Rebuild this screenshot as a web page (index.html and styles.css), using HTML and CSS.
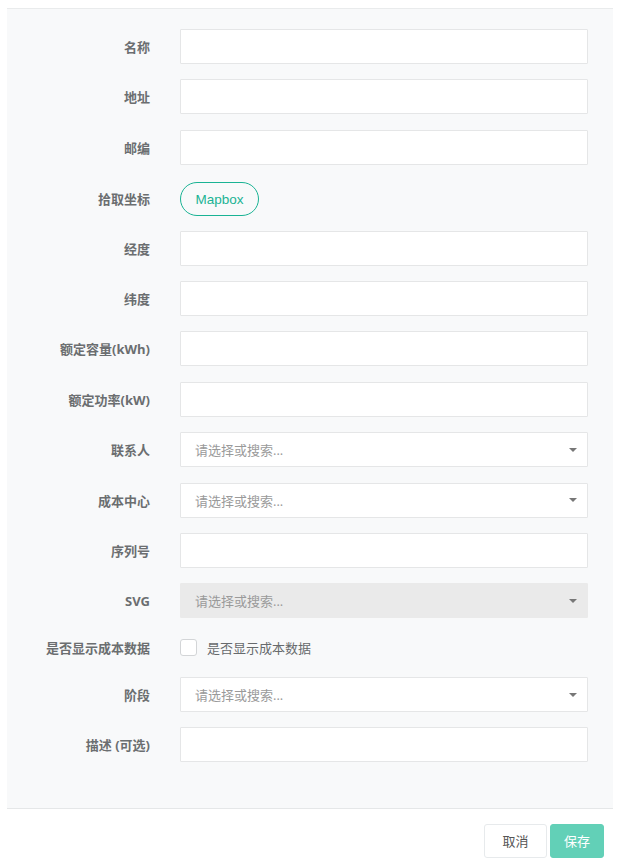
FILE: index.html
```html
<!DOCTYPE html>
<html lang="zh">
<head>
<meta charset="utf-8">
<title>表单</title>
<link rel="stylesheet" href="styles.css">
</head>
<body>
<div class="modal">
  <div class="modal-body">
    <form class="form">
      <div class="row"><label class="lbl">名称</label><input class="inp" type="text"></div>
      <div class="row"><label class="lbl">地址</label><input class="inp" type="text"></div>
      <div class="row"><label class="lbl">邮编</label><input class="inp" type="text"></div>
      <div class="row"><label class="lbl">拾取坐标</label><div class="ctl"><button type="button" class="btn-map">Mapbox</button></div></div>
      <div class="row"><label class="lbl">经度</label><input class="inp" type="text"></div>
      <div class="row"><label class="lbl">纬度</label><input class="inp" type="text"></div>
      <div class="row"><label class="lbl">额定容量(kWh)</label><input class="inp" type="text"></div>
      <div class="row"><label class="lbl">额定功率(kW)</label><input class="inp" type="text"></div>
      <div class="row"><label class="lbl">联系人</label><div class="sel"><span class="ph">请选择或搜索...</span><b class="caret"></b></div></div>
      <div class="row"><label class="lbl">成本中心</label><div class="sel"><span class="ph">请选择或搜索...</span><b class="caret"></b></div></div>
      <div class="row"><label class="lbl">序列号</label><input class="inp" type="text"></div>
      <div class="row"><label class="lbl">SVG</label><div class="sel sel-disabled"><span class="ph">请选择或搜索...</span><b class="caret"></b></div></div>
      <div class="row row-check"><label class="lbl">是否显示成本数据</label><label class="chk"><span class="box"></span><span class="chk-text">是否显示成本数据</span></label></div>
      <div class="row"><label class="lbl">阶段</label><div class="sel"><span class="ph">请选择或搜索...</span><b class="caret"></b></div></div>
      <div class="row"><label class="lbl">描述 (可选)</label><input class="inp" type="text"></div>
    </form>
  </div>
  <div class="modal-footer">
    <button type="button" class="btn btn-white">取消</button>
    <button type="button" class="btn btn-primary">保存</button>
  </div>
</div>
</body>
</html>
```
FILE: styles.css
```css
html, body {
  margin: 0;
  padding: 0;
  background: #ffffff;
}
body {
  font-family: "Open Sans", "Noto Sans CJK SC", sans-serif;
  font-size: 13px;
  color: #676a6c;
}
.modal {
  width: 620px;
}
.modal-body {
  margin: 8px 7px 0 7px;
  background: #f8f9fa;
  border-top: 1px solid #e9ebec;
  border-bottom: 1px solid #e5e7e8;
  padding: 20px 25px 30px 0;
}
.form {
  margin: 0;
}
.row {
  display: grid;
  grid-template-columns: 143px 1fr;
  column-gap: 30px;
  align-items: center;
  height: 35px;
  margin-bottom: 15.4px;
}
.row-check {
  height: 28px;
}
.lbl {
  text-align: right;
  font-weight: 700;
  font-size: 13px;
  color: #6b6e70;
  white-space: nowrap;
}
.inp {
  box-sizing: border-box;
  height: 35px;
  width: 100%;
  margin: 0;
  border: 1px solid #e5e6e7;
  border-radius: 1px;
  background: #ffffff;
  font: inherit;
  padding: 6px 12px;
  outline: none;
}
.ctl {
  display: flex;
  align-items: center;
}
.btn-map {
  box-sizing: border-box;
  height: 34px;
  width: 79px;
  border: 1px solid #1ab394;
  border-radius: 17px;
  background: transparent;
  color: #1ab394;
  font-family: "Liberation Sans", "Noto Sans CJK SC", sans-serif;
  font-size: 13.5px;
  padding: 0;
  margin-top: 2px;
}
.sel {
  box-sizing: border-box;
  height: 35px;
  display: flex;
  align-items: center;
  border: 1px solid #e5e6e7;
  border-radius: 1px;
  background: #ffffff;
  padding: 0 10px 0 14px;
}
.sel-disabled {
  background: #eaeaea;
  border-color: #eaeaea;
}
.ph {
  color: #9a9a9a;
  font-size: 13px;
}
.caret {
  margin-left: auto;
  width: 0;
  height: 0;
  border-style: solid;
  border-width: 4px 4px 0 4px;
  border-color: #777 transparent transparent transparent;
}
.chk {
  display: flex;
  align-items: center;
  gap: 10px;
}
.box {
  box-sizing: border-box;
  width: 17px;
  height: 17px;
  border: 1px solid #d3d5d7;
  border-radius: 3px;
  background: #ffffff;
}
.chk-text {
  font-size: 13px;
  color: #676a6c;
}
.modal-footer {
  display: flex;
  justify-content: flex-end;
  gap: 3px;
  padding: 15px 16px 0 0;
}
.btn {
  box-sizing: border-box;
  height: 34px;
  border-radius: 3px;
  font-family: "Open Sans", "Noto Sans CJK SC", sans-serif;
  font-size: 13px;
  cursor: pointer;
  padding: 0;
}
.btn-white {
  width: 63px;
  background: #ffffff;
  border: 1px solid #e7eaec;
  color: #555;
}
.btn-primary {
  width: 54px;
  background: #62d0b7;
  border: 1px solid #62d0b7;
  color: #ffffff;
}
```
